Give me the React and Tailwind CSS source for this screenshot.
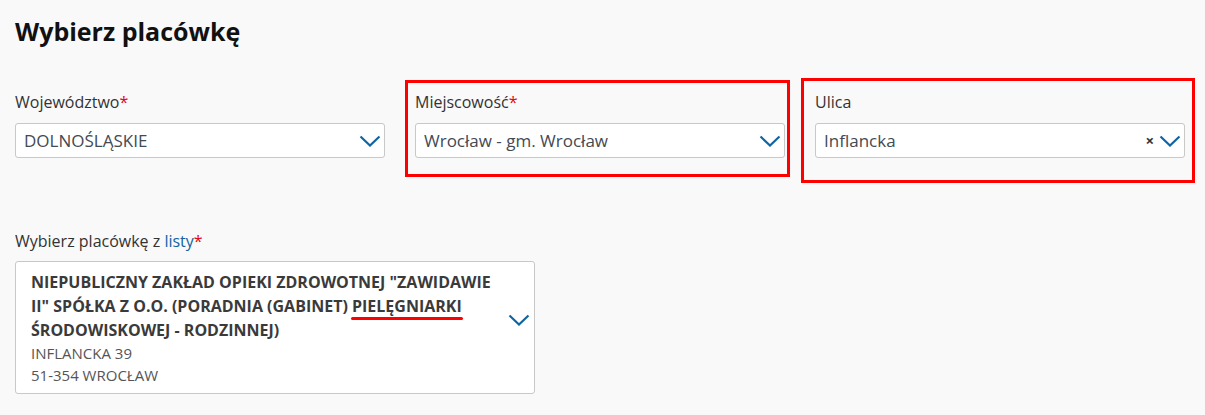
import React from "react";

function Chevron({ className = "" }) {
  return (
    <svg width="22" height="12" viewBox="0 0 22 12" className={className}>
      <path d="M1.5 1.5 L11 10.5 L20.5 1.5" fill="none" stroke="#0e65a3" strokeWidth="2.2" />
    </svg>
  );
}

function Select({ value, clear }) {
  return (
    <div className="flex h-[35px] items-center rounded-[3px] border border-[#c8c8c8] bg-white pl-[8px] pr-[3px]">
      <span className="flex-1 text-[17px] text-[#434a52]">{value}</span>
      {clear && <span className="mr-[5px] text-[15px] font-bold text-[#333]">×</span>}
      <Chevron />
    </div>
  );
}

export default function App() {
  return (
    <div className="min-h-[415px] bg-[#f9f9f9] px-[15px] pt-[13px]" style={{ fontFamily: '"Open Sans", sans-serif' }}>
      <h1 className="text-[25px] font-bold leading-[36px] text-[#111]">Wybierz placówkę</h1>
      <div className="mt-[42px] grid grid-cols-[370px_370px_370px] gap-x-[30px]">
        <div>
          <div className="mb-[10px] text-[16px] leading-[22px] text-[#333]">
            Województwo<span className="text-[#e3001b]">*</span>
          </div>
          <Select value="DOLNOŚLĄSKIE" />
        </div>
        <div className="relative">
          <div className="pointer-events-none absolute left-[-10px] right-[-5px] top-[-11px] bottom-[-19px] border-[3px] border-[#f00]" />
          <div className="mb-[10px] text-[16px] leading-[22px] text-[#333]">
            Miejscowość<span className="text-[#e3001b]">*</span>
          </div>
          <Select value="Wrocław - gm. Wrocław" />
        </div>
        <div className="relative">
          <div className="pointer-events-none absolute left-[-14px] right-[-10px] top-[-13px] bottom-[-25px] border-[3px] border-[#f00]" />
          <div className="mb-[10px] text-[16px] leading-[22px] text-[#333]">Ulica</div>
          <Select value="Inflancka" clear />
        </div>
      </div>
      <div className="mt-[72px] w-[520px]">
        <div className="mb-[9px] text-[16px] leading-[22px] text-[#333]">
          Wybierz placówkę z <span className="text-[#0e65a3]">listy</span>
          <span className="text-[#e3001b]">*</span>
        </div>
        <div className="flex items-center rounded-[3px] border border-[#c8c8c8] bg-white pt-[8px] pb-[7px] pl-[15px]">
          <div className="w-[468px]">
            <div className="text-[16px] font-bold leading-[24px] text-[#3a3a3a]">
              NIEPUBLICZNY ZAKŁAD OPIEKI ZDROWOTNEJ "ZAWIDAWIE II" SPÓŁKA Z O.O. (PORADNIA (GABINET){" "}
              <span className="relative">
                PIELĘGNIARKI
                <span className="absolute left-[-1px] right-[-1px] bottom-[-3px] h-[3px] rounded-full bg-[#f00]" />
              </span>{" "}
              ŚRODOWISKOWEJ - RODZINNEJ)
            </div>
            <div className="text-[15px] leading-[22px] text-[#555]">INFLANCKA 39</div>
            <div className="text-[15px] leading-[22px] text-[#555]">51-354 WROCŁAW</div>
          </div>
          <Chevron className="mb-[16px] ml-[9px]" />
        </div>
      </div>
    </div>
  );
}
